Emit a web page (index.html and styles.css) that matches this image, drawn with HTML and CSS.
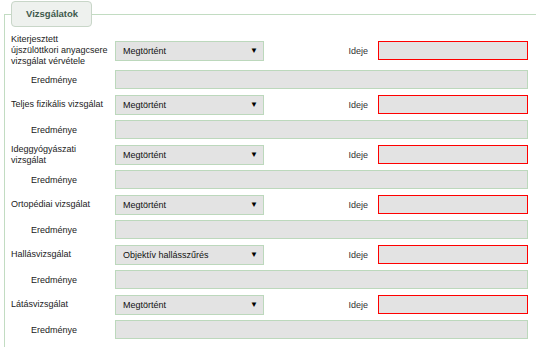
FILE: index.html
```html
<!DOCTYPE html>
<html lang="hu">
<head>
    <meta charset="UTF-8">
    <meta name="viewport" content="width=device-width, initial-scale=1.0">
    <title>Vizsgálatok</title>
    <link rel="stylesheet" href="styles.css">
</head>
<body>
    <fieldset class="panel">
        <legend class="panel-title">Vizsgálatok</legend>
        <div class="exams">
            <label class="exam-label">Kiterjesztett<br>újszülöttkori anyagcsere vizsgálat vérvétele</label>
            <span class="select-wrap"><select class="field"><option>Megtörtént</option></select></span>
            <span class="date-label">Ideje</span>
            <input type="text" class="field date">
            <span class="result-label">Eredménye</span>
            <input type="text" class="field result">

            <label class="exam-label">Teljes fizikális vizsgálat</label>
            <span class="select-wrap"><select class="field"><option>Megtörtént</option></select></span>
            <span class="date-label">Ideje</span>
            <input type="text" class="field date">
            <span class="result-label">Eredménye</span>
            <input type="text" class="field result">

            <label class="exam-label">Ideggyógyászati vizsgálat</label>
            <span class="select-wrap"><select class="field"><option>Megtörtént</option></select></span>
            <span class="date-label">Ideje</span>
            <input type="text" class="field date">
            <span class="result-label">Eredménye</span>
            <input type="text" class="field result">

            <label class="exam-label">Ortopédiai vizsgálat</label>
            <span class="select-wrap"><select class="field"><option>Megtörtént</option></select></span>
            <span class="date-label">Ideje</span>
            <input type="text" class="field date">
            <span class="result-label">Eredménye</span>
            <input type="text" class="field result">

            <label class="exam-label">Hallásvizsgálat</label>
            <span class="select-wrap"><select class="field"><option>Objektív hallásszűrés</option></select></span>
            <span class="date-label">Ideje</span>
            <input type="text" class="field date">
            <span class="result-label">Eredménye</span>
            <input type="text" class="field result">

            <label class="exam-label">Látásvizsgálat</label>
            <span class="select-wrap"><select class="field"><option>Megtörtént</option></select></span>
            <span class="date-label">Ideje</span>
            <input type="text" class="field date">
            <span class="result-label">Eredménye</span>
            <input type="text" class="field result">
        </div>
    </fieldset>
</body>
</html>
```

FILE: styles.css
```css
html, body {
    overflow: hidden;
}
body {
    margin: 0;
    background-color: #fff;
    font-family: "Liberation Sans", Arial, sans-serif;
    font-size: 9px;
    color: #222;
}
.panel {
    margin: 1px 0 0 4px;
    padding: 7px 0 20px 6px;
    width: 526px;
    border: 1px solid #c2dcc2;
    min-width: 0;
}
.panel-title {
    padding: 0 13px 0 14px;
    line-height: 24px;
    font-weight: bold;
    font-size: 9.5px;
    color: #3e5a4c;
    background-color: #eef1ee;
    border: 1px solid #c8d6c8;
    border-radius: 4px;
}
.exams {
    display: grid;
    grid-template-columns: 104px 149px 114px 150px;
    grid-auto-rows: minmax(25px, auto);
    align-items: center;
}
.exam-label {
    padding-right: 4px;
    line-height: 11px;
}
.result-label {
    padding-left: 20px;
}
.date-label {
    text-align: right;
    padding-right: 10px;
    color: #333;
}
.field {
    box-sizing: border-box;
    height: 19px;
    margin: 0;
    background-color: #e3e3e3;
    border: 1px solid #bcd8bc;
    border-radius: 0;
    font-family: inherit;
    font-size: 9px;
    color: #111;
    outline: none;
}
.select-wrap {
    position: relative;
    display: block;
}
.select-wrap select {
    -webkit-appearance: none;
    appearance: none;
    display: block;
    width: 100%;
    height: 20px;
    padding: 0 0 0 7px;
}
.select-wrap::after {
    content: "▼";
    position: absolute;
    right: 6px;
    top: 5px;
    font-size: 8px;
    line-height: 10px;
    color: #000;
    pointer-events: none;
}
.field.date {
    width: 150px;
    border: 1px solid #ff0000;
}
.result {
    grid-column: 2 / 5;
    width: 100%;
}
```
